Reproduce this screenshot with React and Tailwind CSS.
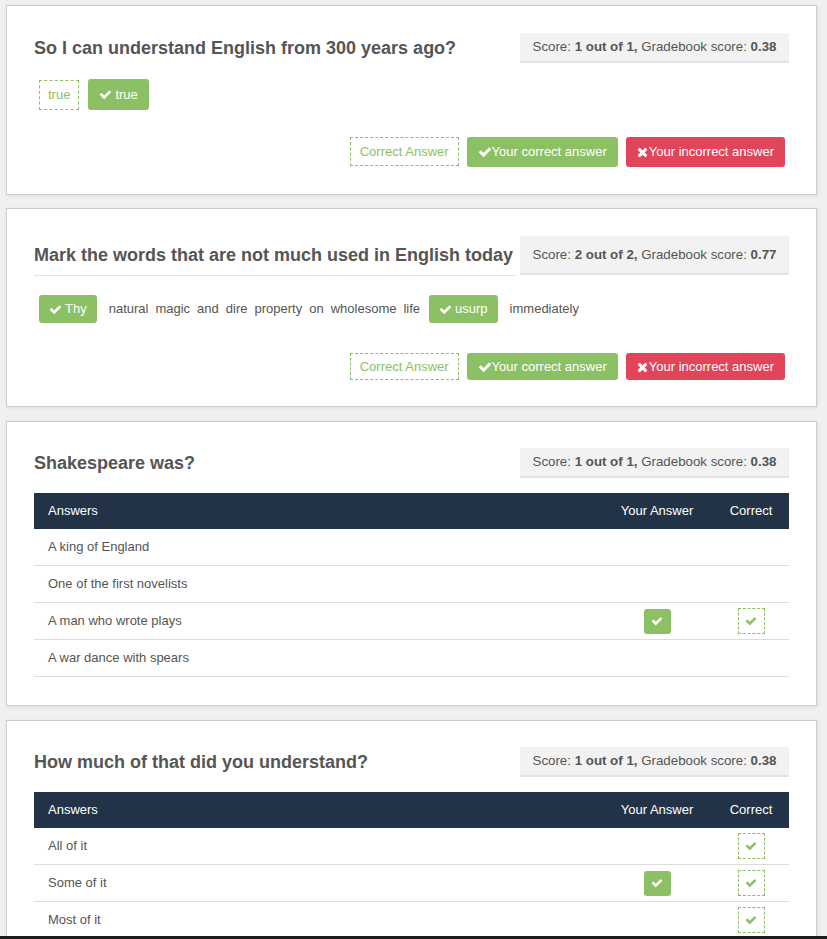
import React from 'react';

const font = { fontFamily: '"Liberation Sans", Arial, sans-serif' };

// Font Awesome 4 style glyphs (heavier than the fa5 ones)
const Check = ({ className = '' }) => (
    <svg viewBox="0 0 1792 1792" className={className} fill="currentColor" aria-hidden="true">
        <path d="M1671 566q0 40-28 68l-724 724-136 136q-28 28-68 28t-68-28l-136-136-362-362q-28-28-28-68t28-68l136-136q28-28 68-28t68 28l294 295 656-657q28-28 68-28t68 28l136 136q28 28 28 68z" />
    </svg>
);

const Times = ({ className = '' }) => (
    <svg viewBox="0 0 1408 1792" className={className} fill="currentColor" aria-hidden="true">
        <path d="M1298 1322q0 40-28 68l-136 136q-28 28-68 28t-68-28l-294-294-294 294q-28 28-68 28t-68-28l-136-136q-28-28-28-68t28-68l294-294-294-294q-28-28-28-68t28-68l136-136q28-28 68-28t68 28l294 294 294-294q28-28 68-28t68 28l136 136q28 28 28 68t-28 68l-294 294 294 294q28 28 28 68z" />
    </svg>
);

const ScoreBox = ({ score, total, grade, tall }) => (
    <div
        className={`flex items-center justify-center shrink-0 w-[269px] bg-[#f2f2f2] border-b-2 border-[#e3e3e3] text-[13.3px] text-[#555] ${tall ? 'h-[39px]' : 'h-[30px]'}`}
    >
        <span>
            Score: <b>{score} out of {total},</b> Gradebook score: <b>{grade}</b>
        </span>
    </div>
);

const Legend = ({ tall }) => (
    <div className="flex justify-end gap-2 pr-[4px] text-[13px]">
        <div className={`flex items-center px-[9px] border border-dashed border-[#8bc164] text-[#8bc164] ${tall ? 'h-[29px]' : 'h-[27px]'}`}>
            Correct Answer
        </div>
        <div className={`flex items-center px-[11px] rounded-[3px] bg-[#8bc164] text-white ${tall ? 'h-[30px]' : 'h-[27px]'}`}>
            <Check className="w-[14px] h-[14px]" />
            Your correct answer
        </div>
        <div className={`flex items-center px-[11px] rounded-[3px] bg-[#e0455a] text-white ${tall ? 'h-[30px]' : 'h-[27px]'}`}>
            <Times className="w-[11px] h-[14px] mr-[1px]" />
            Your incorrect answer
        </div>
    </div>
);

const Chip = ({ children }) => (
    <span className="inline-flex items-center gap-[3px] h-[28px] px-[10px] rounded-[3px] bg-[#8bc164] text-white text-[13px]">
        <Check className="w-[13px] h-[13px]" />
        {children}
    </span>
);

const Card = ({ children, className = '' }) => (
    <div className={`ml-[6px] mr-[10px] bg-white border border-[#cccccc] shadow-[1px_1px_4px_rgba(0,0,0,0.08)] px-[27px] ${className}`}>
        {children}
    </div>
);

const FilledCheck = () => (
    <span className="inline-flex items-center justify-center w-[27px] h-[25px] rounded-[3px] bg-[#8bc164] text-white">
        <Check className="w-[12px] h-[12px]" />
    </span>
);

const DashedCheck = () => (
    <span className="inline-flex items-center justify-center w-[27px] h-[26px] border border-dashed border-[#8bc164] text-[#8bc164]">
        <Check className="w-[12px] h-[12px]" />
    </span>
);

const AnswerTable = ({ rows }) => (
    <div className="mt-[15px] text-[13px]">
        <div className="grid grid-cols-[1fr_96px_76px] gap-x-2 items-center h-[36px] bg-[#233347] text-white">
            <div className="pl-[14px]">Answers</div>
            <div className="text-center">Your Answer</div>
            <div className="text-center">Correct</div>
        </div>
        {rows.map((row, i) => (
            <div key={i} className="grid grid-cols-[1fr_96px_76px] gap-x-2 items-center h-[37px] border-b border-[#dddddd] text-[#555]">
                <div className="pl-[14px]">{row.text}</div>
                <div className="flex justify-center">{row.mine && <FilledCheck />}</div>
                <div className="flex justify-center">{row.correct && <DashedCheck />}</div>
            </div>
        ))}
    </div>
);

const App = () => {
    return (
        <div className="min-h-screen bg-[#f0f0f0] pt-[5px] pb-[20px] text-[#555]" style={font}>
            {/* Q1: true / false */}
            <Card className="pt-[27px] pb-[27px]">
                <div className="flex items-center justify-between">
                    <h2 className="text-[18px] font-bold text-[#555]">So I can understand English from 300 years ago?</h2>
                    <ScoreBox score="1" total="1" grade="0.38" />
                </div>
                <div className="flex items-center gap-[9px] mt-[16px] pl-[5px] text-[13px]">
                    <span className="inline-flex items-center h-[30px] px-[8px] border border-dashed border-[#8bc164] text-[#8bc164]">true</span>
                    <span className="inline-flex items-center gap-[3px] h-[31px] px-[11px] rounded-[3px] bg-[#8bc164] text-white">
                        <Check className="w-[13px] h-[13px]" />
                        true
                    </span>
                </div>
                <div className="mt-[27px]">
                    <Legend tall />
                </div>
            </Card>

            {/* Q2: mark the words */}
            <Card className="mt-[13px] pt-[27px] pb-[26px]">
                <div className="flex items-start justify-between">
                    <h2 className="h-[40px] flex items-center pr-[2px] border-b border-[#e3e3e3] text-[18px] font-bold text-[#555]">
                        Mark the words that are not much used in English today
                    </h2>
                    <ScoreBox score="2" total="2" grade="0.77" tall />
                </div>
                <div className="flex items-center mt-[19px] pl-[5px] text-[13px] text-[#555]">
                    <Chip>Thy</Chip>
                    <span className="ml-[12px] mr-[9px] [word-spacing:3.4px]">natural magic and dire property on wholesome life</span>
                    <Chip>usurp</Chip>
                    <span className="ml-[12px]">immediately</span>
                </div>
                <div className="mt-[30px]">
                    <Legend />
                </div>
            </Card>

            {/* Q3: single choice */}
            <Card className="mt-[14px] pt-[26px] pb-[28px]">
                <div className="flex items-center justify-between">
                    <h2 className="text-[18px] font-bold text-[#555]">Shakespeare was?</h2>
                    <ScoreBox score="1" total="1" grade="0.38" />
                </div>
                <AnswerTable
                    rows={[
                        { text: 'A king of England' },
                        { text: 'One of the first novelists' },
                        { text: 'A man who wrote plays', mine: true, correct: true },
                        { text: 'A war dance with spears' },
                    ]}
                />
            </Card>

            {/* Q4: multiple choice */}
            <Card className="mt-[14px] pt-[26px] pb-[27px]">
                <div className="flex items-center justify-between">
                    <h2 className="text-[18px] font-bold text-[#555]">How much of that did you understand?</h2>
                    <ScoreBox score="1" total="1" grade="0.38" />
                </div>
                <AnswerTable
                    rows={[
                        { text: 'All of it', correct: true },
                        { text: 'Some of it', mine: true, correct: true },
                        { text: 'Most of it', correct: true },
                    ]}
                />
            </Card>

            {/* taskbar edge along the bottom of the window */}
            <div className="fixed left-0 right-0 bottom-0 h-[3px] bg-[#1c1c1c]" />
        </div>
    );
};

export default App;
